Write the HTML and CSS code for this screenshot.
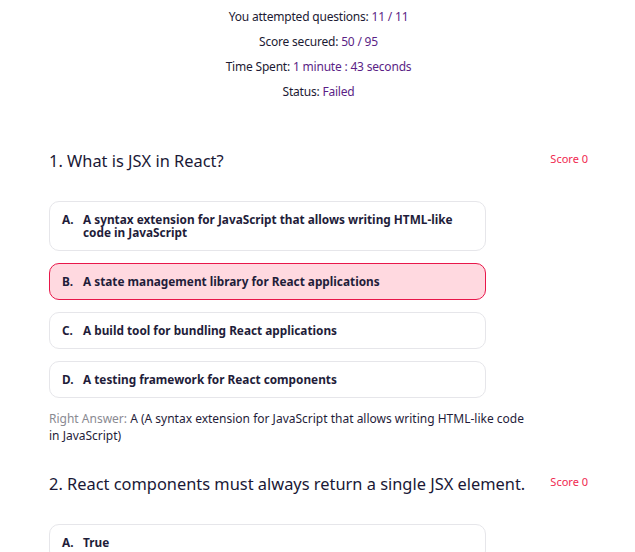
FILE: index.html
```html
<!DOCTYPE html>
<html>
<head>
<meta charset="utf-8">
<link rel="stylesheet" href="styles.css">
</head>
<body>
<div class="page">
  <section class="summary">
    <p>You attempted questions: <span class="val">11 / 11</span></p>
    <p>Score secured: <span class="val">50 / 95</span></p>
    <p>Time Spent: <span class="val">1 minute : 43 seconds</span></p>
    <p>Status: <span class="val">Failed</span></p>
  </section>

  <section class="question">
    <div class="q-head">
      <h2 class="q-title">1. What is JSX in React?</h2>
      <span class="score">Score 0</span>
    </div>
    <ul class="options">
      <li class="option"><span class="letter">A.</span><span class="text">A syntax extension for JavaScript that allows writing HTML-like code in JavaScript</span></li>
      <li class="option wrong"><span class="letter">B.</span><span class="text">A state management library for React applications</span></li>
      <li class="option"><span class="letter">C.</span><span class="text">A build tool for bundling React applications</span></li>
      <li class="option"><span class="letter">D.</span><span class="text">A testing framework for React components</span></li>
    </ul>
    <p class="answer"><span class="ans-label">Right Answer:</span> A (A syntax extension for JavaScript that allows writing HTML-like code in JavaScript)</p>
  </section>

  <section class="question">
    <div class="q-head">
      <h2 class="q-title">2. React components must always return a single JSX element.</h2>
      <span class="score">Score 0</span>
    </div>
    <ul class="options">
      <li class="option"><span class="letter">A.</span><span class="text">True</span></li>
      <li class="option"><span class="letter">B.</span><span class="text">False</span></li>
    </ul>
  </section>
</div>
</body>
</html>
```
FILE: styles.css
```css
* { box-sizing: border-box; }
body {
  margin: 0;
  background: #fff;
  font-family: "Noto Sans", "Open Sans", sans-serif;
  color: #1c1a33;
}
.page {
  padding: 4px 47px 0 49px;
}
.summary {
  text-align: center;
  font-size: 12px;
  letter-spacing: -0.2px;
  line-height: 25px;
  margin-bottom: 45px;
}
.summary p { margin: 0; }
.val { color: #5b1f86; }
.question { margin-bottom: 28px; }
.q-head {
  display: flex;
  justify-content: space-between;
  align-items: flex-start;
}
.q-title {
  margin: 0;
  font-size: 16.4px;
  font-weight: 400;
  line-height: 24px;
  color: #1a1836;
}
.score {
  font-size: 11px;
  color: #f0284f;
  line-height: 20px;
}
.options {
  list-style: none;
  margin: 28px 0 0;
  padding: 0;
  width: 437px;
  display: flex;
  flex-direction: column;
  gap: 12px;
}
.option {
  display: flex;
  border: 1px solid #e6e6ea;
  border-radius: 10px;
  padding: 11px 12px;
  font-size: 11.8px;
  font-weight: 700;
  line-height: 13px;
  color: #1f1d3a;
}
.option.wrong {
  background: #ffd9e0;
  border-color: #e8174a;
}
.letter { flex: none; width: 21px; }
.answer {
  margin: 12px 0 0;
  max-width: 482px;
  font-size: 12px;
  line-height: 17px;
  color: #1f1d3a;
}
.ans-label { color: #8a8a92; }
```
